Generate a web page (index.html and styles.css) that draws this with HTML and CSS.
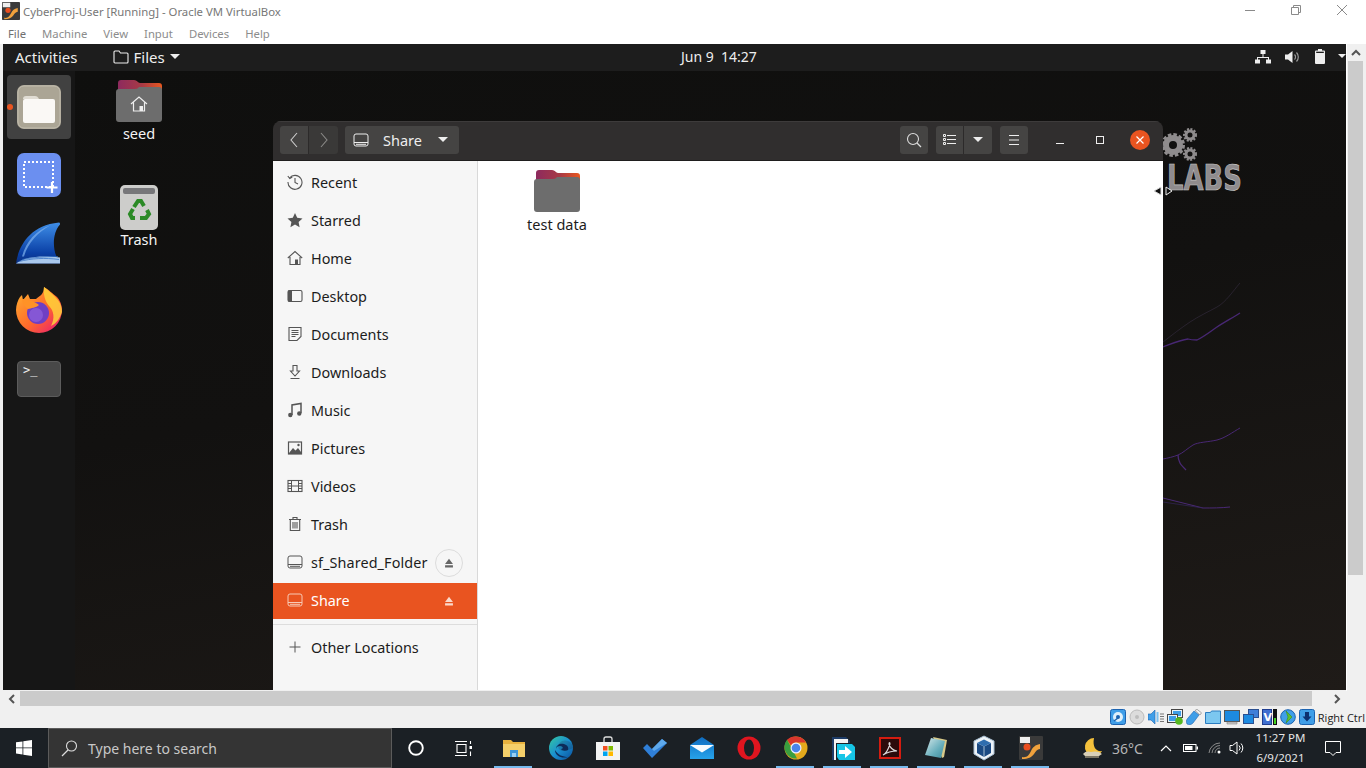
FILE: index.html
```html
<!DOCTYPE html>
<html lang="en">
<head>
<meta charset="utf-8">
<title>CyberProj-User [Running] - Oracle VM VirtualBox</title>
<link rel="stylesheet" href="styles.css">
</head>
<body>
<svg class="defs" aria-hidden="true">
  <defs>
    <filter id="soft" x="-10%" y="-10%" width="120%" height="120%"><feGaussianBlur stdDeviation=".7"/></filter>
    <linearGradient id="folderTop" x1="0" x2="1" y1="0" y2="0"><stop offset="0" stop-color="#8d2a5e"/><stop offset=".55" stop-color="#a83a45"/><stop offset="1" stop-color="#e9581f"/></linearGradient>
    <linearGradient id="sharkG" x1="0" x2="0" y1="0" y2="1"><stop offset="0" stop-color="#3f8fe8"/><stop offset=".75" stop-color="#0a3fa5"/><stop offset="1" stop-color="#0a2f80"/></linearGradient>
    <linearGradient id="foxG" x1="0" x2="1" y1="0" y2="1"><stop offset="0" stop-color="#ffb52e"/><stop offset=".55" stop-color="#ff6a2b"/><stop offset="1" stop-color="#e8127b"/></linearGradient>
    <linearGradient id="mailG" x1="0" x2="0" y1="0" y2="1"><stop offset="0" stop-color="#0f6cc0"/><stop offset="1" stop-color="#27a3ea"/></linearGradient>
    <linearGradient id="edgeG" x1="0" x2="1" y1="0" y2="1"><stop offset="0" stop-color="#36c9a0"/><stop offset=".5" stop-color="#1a8fd0"/><stop offset="1" stop-color="#0b4f9c"/></linearGradient>
    <linearGradient id="noteG" x1="0" x2="1" y1="0" y2="1"><stop offset="0" stop-color="#d5e8ea"/><stop offset=".6" stop-color="#67aebc"/><stop offset="1" stop-color="#3d8b9c"/></linearGradient>
    <symbol id="i-disk" viewBox="0 0 16 16"><rect x="1" y="2" width="14" height="12" rx="2" fill="none" stroke="currentColor" stroke-width="1"/><path d="M1 10.500h14M3 12.300h10" stroke="currentColor" stroke-width="1" fill="none"/></symbol>
    <symbol id="i-eject" viewBox="0 0 16 16"><path d="M8 3l4.500 6h-9z M3.500 10.500h9V13h-9z" fill="currentColor"/></symbol>
    <symbol id="i-vboxapp" viewBox="0 0 24 24"><rect width="24" height="24" rx="1" fill="#3a3a3a"/><rect x="1" y="1" width="10" height="6" fill="#eee"/><circle cx="8" cy="11" r="3.500" fill="#ea4e1f"/><path d="M3 21c5 1 7-2 9-6s4-6 9-7v5c-3 .500-4 2-6 5s-6 5-12 5z" fill="#f2a23c"/></symbol>
  </defs>
</svg>

<header class="title-bar">
  <svg class="title-logo" width="18" height="18"><use href="#i-vboxapp"/></svg>
  <span class="title-text">CyberProj-User [Running] - Oracle VM VirtualBox</span>
  <div class="win-controls">
    <svg width="12" height="12" viewBox="0 0 12 12"><path d="M1 6.500h10" stroke="#8a8a8a"/></svg>
    <svg width="12" height="12" viewBox="0 0 12 12"><path d="M3.500 3V1.500h7v7H9M1.500 3.500h7v7h-7z" fill="none" stroke="#8a8a8a"/></svg>
    <svg width="12" height="12" viewBox="0 0 12 12"><path d="M1 1l10 10M11 1L1 11" stroke="#8a8a8a"/></svg>
  </div>
</header>
<nav class="menu-bar">
  <span class="menu-first">File</span><span>Machine</span><span>View</span><span>Input</span><span>Devices</span><span>Help</span>
</nav>

<div class="guest-row">
  <main class="guest">
    <div class="top-bar">
      <span class="activities">Activities</span>
      <span class="app-menu">
        <svg width="16" height="14" viewBox="0 0 16 14"><path d="M1 3V2a1 1 0 0 1 1-1h4l1.500 2H14a1 1 0 0 1 1 1v8a1 1 0 0 1-1 1H2a1 1 0 0 1-1-1z" fill="none" stroke="#eee" stroke-width="1.100"/></svg>
        <span>Files</span>
        <svg width="10" height="6" viewBox="0 0 10 6"><path d="M0 0h10L5 5z" fill="#eee"/></svg>
      </span>
      <span class="clock">Jun 9&nbsp; 14:27</span>
      <span class="status-icons">
        <svg width="16" height="14" viewBox="0 0 16 14"><path d="M5.500 0h5v4h-5zM0 9.500h5v4H0zM11 9.500h5v4h-5zM7.500 4h1v3h5.500v3h-1V8H3v2H2V7h5.500z" fill="#eee"/></svg>
        <svg width="16" height="14" viewBox="0 0 16 14"><path d="M0 4.500h3L7.500 1v12L3 9.500H0z" fill="#eee"/><path d="M9.500 4.500a3.500 3.500 0 0 1 0 5M11.500 2.500a6.500 6.500 0 0 1 0 9" fill="none" stroke="#999" stroke-width="1.200"/></svg>
        <svg width="10" height="15" viewBox="0 0 10 15"><path d="M3 0h4v1.500h2a1 1 0 0 1 1 1V14a1 1 0 0 1-1 1H1a1 1 0 0 1-1-1V2.500a1 1 0 0 1 1-1h2z" fill="#eee"/><rect x="1.200" y="2.700" width="7.600" height="1.300" fill="#1d1d1d"/></svg>
        <svg width="8" height="5" viewBox="0 0 8 5"><path d="M0 0h8L4 4z" fill="#eee"/></svg>
      </span>
    </div>
    <div class="desk-row">
      <aside class="dock">
        <div class="dock-item active">
          <span class="run-dot"></span>
          <svg width="44" height="44" viewBox="0 0 44 44"><rect width="44" height="44" rx="7" fill="#aba595"/><rect x="1" y="1" width="42" height="42" rx="6" fill="none" stroke="#c1bcae" stroke-width="1"/><path d="M6 14a3 3 0 0 1 3-3h9c2 0 3 1 4 3z" fill="#e0dcd3"/><rect x="6" y="14" width="32" height="24" rx="2" fill="#faf8f5"/></svg>
        </div>
        <div class="dock-item dock-shot">
          <svg width="44" height="44" viewBox="0 0 44 44"><rect width="44" height="44" rx="7" fill="#6b8ff0"/><rect x="7" y="9" width="29" height="25" fill="none" stroke="#fff" stroke-width="2" stroke-dasharray="2 2"/><path d="M35 29v11M29.500 34.500h11" stroke="#fff" stroke-width="2.200"/></svg>
        </div>
        <div class="dock-item dock-shark">
          <svg width="46" height="46" viewBox="0 3 46 43"><path d="M0 45c2-15 12-38 43-41 1 0 1 1 1 2-8 9-8 26-1 37l1 2z" fill="url(#sharkG)"/><path d="M6 38c4-15 14-26 28-31C22 14 12 24 8 38z" fill="#7fb2ee" opacity=".7"/><path d="M0 45c10-7 24-8 44-6v6z" fill="#a9c8ec"/><path d="M3 43c12-3 26-4 40-2M6 41c10-2 24-3 36-3" stroke="#2e6cc0" stroke-width=".7" fill="none"/></svg>
        </div>
        <div class="dock-item dock-fox">
          <svg width="46" height="46" viewBox="0 0 46 46"><path d="M28 0c4 2 9 7 13 10 2 2 5 7 5 13a23 23 0 1 1-46 0c0-5 2-10 4-13l2-2 1 5 5-6 2 5h6c3-3 8-4 8-12z" fill="url(#foxG)"/><path d="M28 0c5 4 10 8 14 13 3 4 4 8 4 12-2 6-5 11-11 14 4-8 3-15-2-20-4-5-6-12-5-19z" fill="#ffd23a" opacity=".85"/><circle cx="22" cy="26" r="11" fill="#6f3fc4"/><circle cx="20" cy="28" r="7" fill="#8f63dd" opacity=".7"/><path d="M6 12c4 0 12 2 17 6-3 3-8 3-11 4-3-2-6-6-6-10z" fill="#ff9227"/></svg>
        </div>
        <div class="dock-item dock-term">
          <div class="term-icon">&gt;_</div>
        </div>
      </aside>

      <section class="desktop">
        <svg class="wallpaper" width="1271" height="619" viewBox="75 71 1271 619">
          <g fill="none" stroke="#6a35b5" filter="url(#soft)" opacity=".6">
            <path d="M1163 347c8-3 17-7 25-8 3 1 6 1 9 1 8-4 14-9 20-13s15-9 23-14" stroke-width="1.300"/>
            <path d="M1163 342c9-7 18-14 27-20s18-10 27-15 16-16 23-24" stroke="#5a4a72" stroke-width=".7" opacity=".7"/>
            <path d="M1163 459c5-1 10-2 15-4s10-7 15-10 16-3 24-5 16-8 23-12" stroke-width="1"/>
            <path d="M1178 455c0 3 1 6 2 8s4 5 6 7" stroke-width="1.300"/>
            <path d="M1163 498c13 3 27 7 40 10 9 0 18 0 27-1" stroke-width="1"/>
            <path d="M1163 502c13 2 27 4 40 6" stroke="#46308a" stroke-width=".7"/>
          </g>
          <g fill="none" stroke="#8f8c8d">
            <circle cx="1173" cy="145" r="7" stroke-width="6"/>
            <circle cx="1173" cy="145" r="10.500" stroke-width="3" stroke-dasharray="3.500 2"/>
            <circle cx="1190" cy="135" r="4" stroke-width="3"/>
            <circle cx="1190" cy="135" r="6" stroke-width="2" stroke-dasharray="2 1.500"/>
            <circle cx="1190" cy="154" r="4" stroke-width="3"/>
            <circle cx="1190" cy="154" r="6" stroke-width="2" stroke-dasharray="2 1.500"/>
          </g>
          <text class="labs" x="1167" y="190" textLength="75" lengthAdjust="spacingAndGlyphs">LABS</text>
        </svg>

        <div class="desk-icon desk-home">
          <svg width="46" height="42" viewBox="0 0 46 42"><path d="M2 11V3a3 3 0 0 1 3-3h13c3 0 4 3 6 3h19a3 3 0 0 1 3 3v9H2z" fill="url(#folderTop)"/><path d="M0 12a3 3 0 0 1 3-3h16c2 0 3-1 4-2h20a3 3 0 0 1 3 3v29a3 3 0 0 1-3 3H3a3 3 0 0 1-3-3z" fill="#6d6d6d"/><path d="M15 24l8-7 8 7M17.500 22.500V31h11v-8.500" fill="none" stroke="#eee" stroke-width="1.200"/><rect x="23.500" y="26" width="3.500" height="5" fill="#eee"/></svg>
          <span>seed</span>
        </div>
        <div class="desk-icon desk-trash">
          <svg width="38" height="45" viewBox="0 0 38 45"><rect width="38" height="45" rx="5" fill="#cdcdcb"/><rect x="3" y="3" width="32" height="6" rx="2" fill="#77777a"/><g fill="none" stroke="#2b8a26" stroke-width="4"><path d="M14 22l4-6 3 0 3 5"/><path d="M27 25l2 4-3 4h-6"/><path d="M15 33h-3l-2-4 3-5"/></g></svg>
          <span>Trash</span>
        </div>

        <div class="files-window">
          <header class="files-head">
            <div class="btn-group">
              <button class="hb hb-nav"><svg width="10" height="18" viewBox="0 0 10 18"><path d="M8 2L2 9l6 7" fill="none" stroke="#ccc" stroke-width="1.100"/></svg></button>
              <button class="hb hb-nav hb-dim"><svg width="10" height="18" viewBox="0 0 10 18"><path d="M2 2l6 7-6 7" fill="none" stroke="#8b8a88" stroke-width="1.100"/></svg></button>
            </div>
            <button class="hb path-btn">
              <svg class="ic-light" width="16" height="16"><use href="#i-disk"/></svg>
              <span>Share</span>
              <svg width="10" height="6" viewBox="0 0 10 6"><path d="M0 0h10L5 5z" fill="#eee"/></svg>
            </button>
            <div class="head-right">
              <button class="hb hb-sq"><svg width="16" height="16" viewBox="0 0 16 16"><circle cx="7" cy="7" r="5.500" fill="none" stroke="#ddd" stroke-width="1.100"/><path d="M11 11l4 4" stroke="#ddd" stroke-width="1.300"/></svg></button>
              <div class="btn-group">
                <button class="hb hb-sq"><svg width="14" height="12" viewBox="0 0 14 12"><path d="M.5.500h2v2h-2zM.5 4.500h2v2h-2zM.5 8.500h2v2h-2zM4 1.500h9M4 5.500h9M4 9.500h9" fill="none" stroke="#eee"/></svg></button>
                <button class="hb hb-sq"><svg width="10" height="6" viewBox="0 0 10 6"><path d="M0 0h10L5 5z" fill="#eee"/></svg></button>
              </div>
              <button class="hb hb-sq"><svg width="12" height="10" viewBox="0 0 12 10"><path d="M1 .500h10M1 5h10M1 9.500h10" stroke="#eee"/></svg></button>
              <div class="wm-btns">
                <svg width="10" height="10" viewBox="0 0 10 10"><path d="M1 8.500h8" stroke="#eee"/></svg>
                <svg width="10" height="10" viewBox="0 0 10 10"><rect x="1.500" y="1.500" width="7" height="7" fill="none" stroke="#eee"/></svg>
                <span class="wm-close"><svg width="10" height="10" viewBox="0 0 10 10"><path d="M1.500 1.500l7 7M8.500 1.500l-7 7" stroke="#fff" stroke-width="1.200"/></svg></span>
              </div>
            </div>
          </header>
          <div class="files-body">
            <nav class="sidebar">
              <a class="row"><svg width="16" height="16" viewBox="0 0 16 16"><path d="M2.500 4A7 7 0 1 1 1 8" fill="none" stroke="#555" stroke-width="1.100"/><path d="M.8 2l2 2.500L5.300 3M8 4v4.500l3 1.500" fill="none" stroke="#555" stroke-width="1.100"/></svg><span>Recent</span></a>
              <a class="row"><svg width="16" height="16" viewBox="0 0 16 16"><path d="M8 1l2.200 4.800 5.300.6-3.900 3.600 1 5.200L8 12.600 3.400 15.200l1-5.200L.5 6.400l5.300-.6z" fill="#555"/></svg><span>Starred</span></a>
              <a class="row"><svg width="16" height="16" viewBox="0 0 16 16"><path d="M.8 8L8 1.500 15.200 8M3 7v7.500h10V7" fill="none" stroke="#555" stroke-width="1.100"/><rect x="8" y="9.500" width="3" height="5" fill="#555"/></svg><span>Home</span></a>
              <a class="row"><svg width="16" height="16" viewBox="0 0 16 16"><rect x="1" y="2.500" width="14" height="11" rx="1.500" fill="none" stroke="#555" stroke-width="1.100"/><path d="M1 2.500h4v11H1z" fill="#555"/></svg><span>Desktop</span></a>
              <a class="row"><svg width="16" height="16" viewBox="0 0 16 16"><path d="M2 1.500h12v9l-4 4H2zM4.500 4.500h7M4.500 6.500h7M4.500 8.500h7M4.500 10.500h4" fill="none" stroke="#555" stroke-width="1.100"/></svg><span>Documents</span></a>
              <a class="row"><svg width="16" height="16" viewBox="0 0 16 16"><path d="M6 1.500h4V7h2.500L8 12 3.500 7H6zM3.500 14.500h9" fill="none" stroke="#555" stroke-width="1.100"/></svg><span>Downloads</span></a>
              <a class="row"><svg width="16" height="16" viewBox="0 0 16 16"><path d="M5 13V3l9-1.500V11" fill="none" stroke="#555" stroke-width="1.500"/><circle cx="3.300" cy="13" r="2.200" fill="#555"/><circle cx="12.300" cy="11.500" r="2.200" fill="#555"/></svg><span>Music</span></a>
              <a class="row"><svg width="16" height="16" viewBox="0 0 16 16"><rect x="1.500" y="2" width="13" height="12" fill="none" stroke="#555" stroke-width="1.200"/><path d="M2 13l4-5 2.500 2.500L11 8l3 4v2H2z" fill="#555"/><circle cx="11.500" cy="5" r="1.200" fill="#555"/></svg><span>Pictures</span></a>
              <a class="row"><svg width="16" height="16" viewBox="0 0 16 16"><rect x="1" y="2.500" width="14" height="11" fill="none" stroke="#555" stroke-width="1.100"/><path d="M4.500 2.500v11M11.500 2.500v11M1 5.500h3.500M1 8h3.500M1 10.500h3.500M11.500 5.500H15M11.500 8H15M11.500 10.500H15M4.500 8h7" fill="none" stroke="#555" stroke-width="1"/></svg><span>Videos</span></a>
              <a class="row"><svg width="16" height="16" viewBox="0 0 16 16"><path d="M2 3.500h12M6 3V1.500h4V3M3.300 4v10.500h9.400V4M6 6v6.500M8 6v6.500M10 6v6.500" fill="none" stroke="#555" stroke-width="1.100"/></svg><span>Trash</span></a>
              <a class="row"><svg class="ic-dark" width="16" height="16"><use href="#i-disk"/></svg><span class="sf-name">sf_Shared_Folder</span><span class="eject-ring"><svg class="ic-mid" width="14" height="14"><use href="#i-eject"/></svg></span></a>
              <a class="row row-active"><svg class="ic-peach" width="16" height="16"><use href="#i-disk"/></svg><span>Share</span><span class="eject-plain"><svg class="ic-pale" width="14" height="14"><use href="#i-eject"/></svg></span></a>
              <hr class="side-sep">
              <a class="row"><svg width="16" height="16" viewBox="0 0 16 16"><path d="M8 2.500v11M2.500 8h11" stroke="#555" stroke-width="1"/></svg><span>Other Locations</span></a>
            </nav>
            <div class="file-area">
              <div class="file-item">
                <svg width="46" height="42" viewBox="0 0 46 42"><path d="M2 11V3a3 3 0 0 1 3-3h13c3 0 4 3 6 3h19a3 3 0 0 1 3 3v9H2z" fill="url(#folderTop)"/><path d="M0 12a3 3 0 0 1 3-3h16c2 0 3-1 4-2h20a3 3 0 0 1 3 3v29a3 3 0 0 1-3 3H3a3 3 0 0 1-3-3z" fill="#6d6d6d"/></svg>
                <span>test data</span>
              </div>
            </div>
          </div>
        </div>

        <svg class="resize-cursor" width="20" height="10" viewBox="0 0 20 10"><path d="M8 1v8L1 5z" fill="#111" stroke="#ddd"/><path d="M13 1v8l6-4z" fill="#111" stroke="#eee"/></svg>
      </section>
    </div>
  </main>
  <div class="v-scroll">
    <span class="sb-arrow"><svg width="10" height="7" viewBox="0 0 10 7"><path d="M1 6l4-4 4 4" fill="none" stroke="#555" stroke-width="2"/></svg></span>
    <span class="sb-thumb"></span>
  </div>
</div>

<div class="h-scroll">
  <svg width="7" height="10" viewBox="0 0 7 10"><path d="M6 1L2 5l4 4" fill="none" stroke="#555" stroke-width="2"/></svg>
  <span class="hs-thumb"></span>
  <svg width="7" height="10" viewBox="0 0 7 10"><path d="M1 1l4 4-4 4" fill="none" stroke="#555" stroke-width="2"/></svg>
</div>

<div class="vm-status">
  <svg width="16" height="16" viewBox="0 0 16 16"><rect x=".5" y=".5" width="15" height="15" rx="2" fill="#3f9ee8" stroke="#1c63b0"/><circle cx="8" cy="8" r="5" fill="#dff0fb"/><circle cx="8" cy="8" r="2" fill="#1c63b0"/><path d="M4 12l4-3" stroke="#1c63b0" stroke-width="1.500"/></svg>
  <svg width="16" height="16" viewBox="0 0 16 16"><circle cx="8" cy="8" r="7" fill="#dcdcdc" stroke="#bbb"/><circle cx="8" cy="8" r="2" fill="#bdbdbd"/></svg>
  <svg width="16" height="16" viewBox="0 0 16 16"><path d="M0 5h3l4-4v14l-4-4H0z" fill="#3f9ee8" stroke="#1c63b0" stroke-width=".6"/><path d="M8.500 3h2v10h-2z" fill="#7cc0ef"/><path d="M12 5h4M12 7.500h4M12 10h4M12 12.500h4" stroke="#777"/></svg>
  <svg width="16" height="16" viewBox="0 0 16 16"><rect x="4.500" y=".5" width="11" height="8" fill="#e8f2fa" stroke="#444"/><rect x="6" y="2" width="8" height="5" fill="#3f9ee8"/><rect x=".5" y="5.500" width="10" height="8" fill="#e8f2fa" stroke="#444"/><rect x="2" y="7" width="7" height="5" fill="#3f9ee8"/><circle cx="12" cy="12" r="3.800" fill="#55b820"/></svg>
  <svg width="16" height="16" viewBox="0 0 16 16"><path d="M1 15c-1-2-1-4 1-6l6-7 5 4-6 8c-2 2-4 2-6 1z" fill="#3f9ee8" stroke="#1c63b0" stroke-width=".6"/><path d="M9 1.500l2-1.200 4.500 3.500L14 6z" fill="#f2f2f2" stroke="#777" stroke-width=".6"/></svg>
  <svg width="16" height="16" viewBox="0 0 16 16"><path d="M.5 3.500h5l1-1.500h9v12.500H.5z" fill="#7cc7f0" stroke="#2a7cc0"/></svg>
  <svg width="16" height="16" viewBox="0 0 16 16"><rect x=".5" y="1.500" width="15" height="11" fill="#1d8ae0" stroke="#555"/><path d="M3 13h10v2H3z" fill="#ccc" stroke="#777" stroke-width=".5"/></svg>
  <svg width="16" height="16" viewBox="0 0 16 16"><rect x="5.500" y=".5" width="10" height="8" fill="#3f7fd8" stroke="#2a4f90"/><rect x=".5" y="5.500" width="10" height="9" fill="#1d8ae0" stroke="#2a4f90"/></svg>
  <span class="vtx"><svg width="10" height="16" viewBox="0 0 10 16"><rect x=".5" y=".5" width="9" height="15" fill="#3f6fd0" stroke="#1e3d90"/><text class="vtx-v" x="1.500" y="12">V</text></svg><i class="vtx-meter"></i></span>
  <svg width="16" height="16" viewBox="0 0 16 16"><circle cx="8" cy="8" r="7.300" fill="#3f9ee8" stroke="#1c63b0"/><path d="M6 2l6 6-6 6 2-6z" fill="#5cc030" stroke="#3a8a1c" stroke-width=".6"/></svg>
  <svg width="16" height="16" viewBox="0 0 16 16"><rect x=".5" y=".5" width="15" height="15" rx="2" fill="#3f9ee8" stroke="#1c63b0"/><path d="M6 3h4v4.500h2.500L8 12.500 3.500 7.500H6z" fill="#0c2f70"/></svg>
  <span class="right-ctrl">Right Ctrl</span>
</div>

<footer class="taskbar">
  <div class="start"><svg width="16" height="16" viewBox="0 0 16 16"><path d="M0 2.300l6.500-.9v6.100H0zM7.300 1.300L16 0v7.500H7.300zM0 8.300h6.500v6.200L0 13.600zM7.300 8.300H16V16l-8.700-1.200z" fill="#fff"/></svg></div>
  <div class="search"><svg width="17" height="17" viewBox="0 0 17 17"><circle cx="10.500" cy="6" r="5" fill="none" stroke="#ddd" stroke-width="1.100"/><path d="M7 10L1 16" stroke="#ddd" stroke-width="1.300"/></svg><span>Type here to search</span></div>
  <div class="tb-sys"><svg width="16" height="16" viewBox="0 0 16 16"><circle cx="8" cy="8" r="6.800" fill="none" stroke="#fff" stroke-width="1.900"/></svg></div>
  <div class="tb-sys"><svg width="17" height="15" viewBox="0 0 17 15"><path d="M0 .5h12M2 3.500h9v8H2zM0 14.500h12M15.500 0v3M15.500 10.500V15" fill="none" stroke="#fff" stroke-width="1.100"/><rect x="14.500" y="5" width="2.500" height="3" fill="#fff"/></svg></div>

  <div class="tb-app run"><svg width="24" height="22" viewBox="0 0 24 22"><path d="M1 3h8l2 2h12v15H1z" fill="#e8b23e"/><path d="M1 7h22v13H1z" fill="#f4cf6a"/><path d="M8 13h8v7H8z" fill="#3c95d8"/><path d="M10 16h4v4h-4z" fill="#9bd0f2"/></svg></div>
  <div class="tb-app"><svg width="24" height="24" viewBox="0 0 24 24"><circle cx="12" cy="12" r="12" fill="url(#edgeG)"/><path d="M24 12c0-6-6-9-11-7-4 2-5 7-2 9 2 2 7 1 13-2z" fill="#1d1f24" opacity=".18"/><path d="M7 13c0-4 4-6 8-5 3 1 5 3 4 6-2 1-6 1-7-1 3 0 2-3-1-3-2 0-4 1-4 3zM6 14c0 6 7 9 13 7-5 0-10-2-13-7z" fill="#0d2b59"/></svg></div>
  <div class="tb-app"><svg width="24" height="24" viewBox="0 0 24 24"><path d="M8 7V3a2 2 0 0 1 2-2h4a2 2 0 0 1 2 2v4" fill="none" stroke="#ddd" stroke-width="1.300"/><rect y="6" width="24" height="18" fill="#f3f3f3"/><rect x="7" y="10" width="4.500" height="4.500" fill="#f25022"/><rect x="12.500" y="10" width="4.500" height="4.500" fill="#7fba00"/><rect x="7" y="15.500" width="4.500" height="4.500" fill="#00a4ef"/><rect x="12.500" y="15.500" width="4.500" height="4.500" fill="#ffb900"/></svg></div>
  <div class="tb-app"><svg width="24" height="20" viewBox="0 0 24 20"><path d="M0 10l4-4 5 5L19 1l5 4L9 20z" fill="#2f7fd8"/><path d="M9 11L19 1l5 4L11 13z" fill="#5ea9ec"/></svg></div>
  <div class="tb-app"><svg width="24" height="22" viewBox="0 0 24 22"><path d="M0 8l12-8 12 8v14H0z" fill="url(#mailG)"/><path d="M0 8h24l-12 7.500z" fill="#f6fbfe"/></svg></div>
  <div class="tb-app"><svg width="24" height="24" viewBox="0 0 24 24"><circle cx="12" cy="12" r="11.500" fill="#e0151f"/><ellipse cx="12" cy="12" rx="5" ry="8.500" fill="#1b2025"/></svg></div>
  <div class="tb-app run"><svg width="24" height="24" viewBox="0 0 24 24"><circle cx="12" cy="12" r="11.500" fill="#e3a91c"/><path d="M12 .5A11.500 11.500 0 0 1 22 6.500H12a5.500 5.500 0 0 0-5 3L3 3.800A11.500 11.500 0 0 1 12 .500z" fill="#d9372d"/><path d="M3 3.800l5 9 5 9.600A11.500 11.500 0 0 1 3 3.800z" fill="#3a9e3f"/><circle cx="12" cy="12" r="5.500" fill="#eef"/><circle cx="12" cy="12" r="4.300" fill="#4a85ea"/></svg></div>
  <div class="tb-app run"><svg width="24" height="24" viewBox="0 0 24 24"><path d="M1 1h14l4 4v2H5v17H1z" fill="#1d3b66"/><path d="M3 3h14v4H5v17H3z" fill="#f3f3f3"/><path d="M6 8h15l3 3v13H8l-2-3z" fill="#16c5e6"/><path d="M8 14h6v-4l7 6-7 6v-4H8z" fill="#fff"/></svg></div>
  <div class="tb-app run"><svg width="22" height="22" viewBox="0 0 22 22"><rect x="1" y="1" width="20" height="20" fill="#2b0b0b" stroke="#d41c10" stroke-width="2"/><path d="M4 18c3-1 5-5 7-11 0-2-1-2-1 0 1 4 3 6 8 7-3 0-8 0-14 4z" fill="none" stroke="#ddd" stroke-width="1.100"/></svg></div>
  <div class="tb-app run"><svg width="24" height="24" viewBox="0 0 24 24"><path d="M8 1l14 3-3 17-2 1z" fill="#d8c98a"/><path d="M6 2l14 3-4 17L0 19z" fill="url(#noteG)"/></svg></div>
  <div class="tb-app run"><svg width="24" height="26" viewBox="0 0 24 26"><path d="M12 1l10 5v13l-10 6-10-6V6z" fill="#eef3f8" stroke="#a9bfd3"/><path d="M5 8l7 3.500L19 8v10l-7 4-7-4z" fill="#1b4a83"/><path d="M5 8l7-3.500L19 8l-7 3.500z" fill="#2f6dae"/><path d="M12 11.500V22" stroke="#a9bfd3"/></svg></div>
  <div class="tb-app run"><svg width="24" height="24"><use href="#i-vboxapp"/></svg></div>

  <div class="tray">
    <span class="tray-weather"><svg width="22" height="22" viewBox="0 0 22 22"><path d="M12 1a9 9 0 1 0 8 13c-5 1-10-3-8-13z" fill="#f4c13c"/><path d="M1 17c2-3 6-3 8-2 3-1 8-1 11 2l-3 2H3z" fill="#d8cfb8"/><path d="M3 20h14" stroke="#9a8f78" stroke-width="1.500"/></svg></span>
    <span class="tray-temp">36°C</span>
    <span class="tray-ic tray-25"><svg width="12" height="8" viewBox="0 0 12 8"><path d="M1 7l5-5 5 5" fill="none" stroke="#fff" stroke-width="1.200"/></svg></span>
    <span class="tray-ic tray-25"><svg width="15" height="8" viewBox="0 0 15 8"><rect x=".5" y=".5" width="12.500" height="7" fill="none" stroke="#fff"/><rect x="2" y="2" width="7.500" height="4" fill="#fff"/><rect x="13.500" y="2.500" width="1.500" height="3" fill="#fff"/></svg></span>
    <span class="tray-ic tray-24"><svg width="14" height="12" viewBox="0 0 14 12"><path d="M1 11A11 11 0 0 1 12 1M4 11A8 8 0 0 1 12 3.500M7 11a5 5 0 0 1 5-5" fill="none" stroke="#8a8a8a" stroke-width="1"/><circle cx="11" cy="10" r="1.500" fill="#fff"/></svg></span>
    <span class="tray-ic tray-20"><svg width="16" height="14" viewBox="0 0 16 14"><path d="M1 4.500h2.500L8 1v12L3.500 9.500H1z" fill="none" stroke="#fff"/><path d="M10 4.500a3.500 3.500 0 0 1 0 5M12 2.500a6.500 6.500 0 0 1 0 9" fill="none" stroke="#fff"/></svg></span>
    <span class="tray-clock"><span>11:27 PM</span><span>6/9/2021</span></span>
    <span class="tray-notify"><svg width="16" height="15" viewBox="0 0 16 15"><path d="M.5.500h15v11h-4.500L8 14.500 5 11.500H.5z" fill="none" stroke="#fff"/></svg></span>
  </div>
</footer>
</body>
</html>
```

FILE: styles.css
```css
* { box-sizing: border-box; }
html, body { margin: 0; padding: 0; }
body {
  width: 1366px;
  height: 768px;
  overflow: hidden;
  display: flex;
  flex-direction: column;
  background: #f0f0f0;
  font-family: "Noto Sans", "Open Sans", sans-serif;
}
svg { display: block; flex: none; }
.defs { position: absolute; width: 0; height: 0; }
.ic-light { color: #eee; }
.ic-dark { color: #555; }
.ic-mid { color: #666; }
.ic-peach { color: #f7c9b5; }
.ic-pale { color: #fbd9cb; }

/* VirtualBox chrome */
.title-bar {
  height: 22px;
  background: #fff;
  display: flex;
  align-items: center;
  padding-left: 2px;
}
.title-logo { margin-right: 3px; }
.title-text { font-size: 11.350px; color: #777; }
.win-controls {
  margin-left: auto;
  display: flex;
  gap: 34px;
  padding-right: 18px;
  margin-top: -2px;
}
.menu-bar {
  height: 22px;
  background: #fff;
  display: flex;
  align-items: center;
  gap: 16px;
  padding-left: 8px;
  font-size: 11.300px;
  color: #8c8c8c;
}
.menu-first { color: #707070; }

.guest-row { display: flex; height: 647px; padding-left: 3px; background: #f0f0f0; }
.guest { width: 1343px; height: 646px; display: flex; flex-direction: column; overflow: hidden; }

/* GNOME top bar */
.top-bar {
  height: 27px;
  background: #1d1d1d;
  color: #eee;
  display: flex;
  align-items: center;
  font-size: 15px;
  padding-bottom: 2px;
  position: relative;
}
.activities { margin-left: 12px; }
.app-menu { margin-left: 35px; display: flex; align-items: center; gap: 5px; }
.clock { position: absolute; left: 678px; top: 3px; font-size: 14px; }
.status-icons { margin-left: auto; display: flex; align-items: center; gap: 14px; }
.status-icons svg:last-child { margin-left: -1px; }

.desk-row { flex: 1; display: flex; min-height: 0; }
.dock {
  width: 72px;
  background: #161616;
  display: flex;
  flex-direction: column;
  align-items: center;
}
.dock-item {
  width: 64px;
  height: 64px;
  margin-top: 4px;
  display: flex;
  align-items: center;
  justify-content: center;
  border-radius: 4px;
  position: relative;
}
.dock-item.active { background: #414141; }
.dock-shot { margin-top: 14px; height: 44px; }
.dock-shark { margin-top: 23px; height: 46px; }
.dock-fox { margin-top: 21px; height: 46px; }
.dock-term { margin-top: 28px; height: 36px; }
.run-dot {
  position: absolute;
  left: 0;
  top: 29px;
  width: 6px;
  height: 6px;
  border-radius: 50%;
  background: #e95420;
}
.term-icon {
  width: 44px;
  height: 36px;
  background: #484848;
  border: 1px solid #5c5c5c;
  border-radius: 4px;
  color: #eee;
  font: 12px/14px "DejaVu Sans Mono", monospace;
  padding: 1px 5px;
}

/* Desktop */
.desktop {
  flex: 1;
  position: relative;
  background: linear-gradient(170deg, #0f0f0e 0%, #121110 45%, #1f1b18 100%);
  overflow: hidden;
}
.wallpaper { position: absolute; left: 0; top: 0; }
.labs {
  font: bold 36px "DejaVu Sans", sans-serif;
  fill: #8f8b8d;
  stroke: #c9c9c9;
  stroke-width: .6px;
}
.desk-icon {
  position: absolute;
  width: 80px;
  display: flex;
  flex-direction: column;
  align-items: center;
  color: #f4f4f4;
  font-size: 14.500px;
  line-height: 20px;
}
.desk-home { left: 24px; top: 9px; }
.desk-home span { margin-top: 1px; }
.desk-trash { left: 24px; top: 114px; }
.desk-trash span { margin-top: -1px; }

/* Files window */
.files-window {
  position: absolute;
  left: 198px;
  top: 50px;
  width: 890px;
  bottom: 0;
  display: flex;
  flex-direction: column;
  border-radius: 8px 8px 0 0;
  overflow: hidden;
}
.files-head {
  height: 40px;
  flex: none;
  background: #302e2e;
  border-top: 1px solid #3d3b3b;
  border-bottom: 1px solid #1f1e1e;
  display: flex;
  align-items: center;
  padding-left: 7px;
  padding-bottom: 2px;
}
.btn-group { display: flex; }
.hb {
  height: 28px;
  border: 0;
  padding: 0;
  background: #454443;
  color: #eee;
  font: inherit;
  display: flex;
  align-items: center;
  justify-content: center;
  border-radius: 3px;
}
.btn-group .hb:first-child { border-radius: 3px 0 0 3px; border-right: 1px solid #2c2a2a; }
.btn-group .hb:last-child { border-radius: 0 3px 3px 0; }
.hb-nav { width: 29px; }
.hb-dim { background: #3a3938; }
.path-btn {
  width: 114px;
  margin-left: 7px;
  justify-content: flex-start;
  padding-left: 8px;
  padding-bottom: 1px;
  font-size: 14.500px;
  gap: 14px;
}
.path-btn svg:last-child { margin-left: 2px; }
.head-right { margin-left: auto; display: flex; align-items: center; gap: 8px; }
.hb-sq { width: 28px; }
.wm-btns { display: flex; align-items: center; gap: 30px; margin-left: 19px; padding-right: 13px; }
.wm-close {
  width: 20px;
  height: 20px;
  margin-left: -5px;
  border-radius: 50%;
  background: #e95420;
  display: flex;
  align-items: center;
  justify-content: center;
}
.files-body { flex: 1; display: flex; min-height: 0; }
.sidebar {
  width: 205px;
  background: #f6f6f6;
  border-right: 1px solid #d9d9d9;
  padding-top: 3px;
  font-size: 14.400px;
  color: #1c1c1c;
}
.row {
  height: 38px;
  display: flex;
  align-items: center;
  padding-left: 14px;
  padding-bottom: 2px;
  gap: 8px;
  position: relative;
}
.row-active {
  height: 36px;
  margin-top: 1px;
  background: #e95420;
  color: #fff;
}
.sf-name { letter-spacing: .1px; }
.eject-ring {
  position: absolute;
  left: 162px;
  top: 5px;
  width: 28px;
  height: 28px;
  border: 1px solid #dcdcdc;
  border-radius: 50%;
  display: flex;
  align-items: center;
  justify-content: center;
}
.eject-plain { position: absolute; left: 169px; top: 11px; }
.side-sep { border: 0; border-top: 1px solid #ddd; margin: 5px 0 4px; }
.file-area { flex: 1; background: #fff; padding: 9px 0 0 29px; }
.file-item {
  width: 100px;
  display: flex;
  flex-direction: column;
  align-items: center;
  font-size: 14.500px;
  line-height: 20px;
  color: #1c1c1c;
}
.file-item span { margin-top: 2px; }
.resize-cursor { position: absolute; left: 1078px; top: 115px; }

/* Scrollbars */
.v-scroll { width: 20px; background: #f0f0f0; padding-left: 1px; display: flex; flex-direction: column; border-left: 1px solid #fff; }
.sb-arrow { height: 17px; display: flex; align-items: center; justify-content: center; width: 15px; }
.sb-thumb { width: 15px; height: 514px; background: #cbcbcb; }
.h-scroll {
  height: 15px;
  background: #f0f0f0;
  display: flex;
  align-items: center;
  padding-left: 8px;
}
.hs-thumb { width: 1292px; height: 15px; background: #cbcbcb; margin: 0 22px 0 5px; }

/* VM status bar */
.vm-status {
  height: 22px;
  background: #f0f0f0;
  display: flex;
  align-items: center;
  justify-content: flex-end;
  gap: 3px;
  font-size: 11px;
  color: #222;
  padding-right: 1px;
}
.vtx { display: flex; gap: 1px; }
.vtx-v { font: bold 11px "DejaVu Sans", sans-serif; fill: #fff; }
.vtx-meter { display: block; width: 4px; height: 16px; background: linear-gradient(#111 55%, #3fd020 55%); border: 1px solid #111; }
.right-ctrl { white-space: nowrap; font-family: "Open Sans", sans-serif; }

/* Windows taskbar */
.taskbar {
  flex: 1;
  min-height: 0;
  background: #1b2025;
  display: flex;
  align-items: center;
  color: #fff;
}
.start { width: 48px; display: flex; justify-content: center; }
.search {
  width: 344px;
  height: 40px;
  background: #343434;
  border: 1px solid #5b5b5b;
  display: flex;
  align-items: center;
  padding-left: 12px;
  gap: 10px;
  font-size: 14px;
  color: #c8c8c8;
}
.tb-sys { width: 48px; height: 40px; display: flex; align-items: center; justify-content: center; }
.tb-sys + .tb-sys { width: 46px; margin-right: 4px; }
.tb-app {
  width: 47px;
  height: 40px;
  display: flex;
  align-items: center;
  justify-content: center;
  position: relative;
}
.run::after {
  content: "";
  position: absolute;
  left: 4px;
  right: 5px;
  bottom: 0;
  height: 2px;
  background: #76b9ed;
}
.tray { margin-left: auto; height: 40px; display: flex; align-items: center; }
.tray-weather { width: 30px; }
.tray-temp { color: #b5b5b5; width: 41px; font-size: 14px; }
.tray-ic { display: flex; justify-content: center; }
.tray-25 { width: 25px; }
.tray-24 { width: 24px; }
.tray-20 { width: 20px; }
.tray-clock {
  width: 63px;
  margin-left: 2px;
  display: flex;
  flex-direction: column;
  align-items: center;
  font-size: 11.500px;
  line-height: 20px;
  color: #e6e6e6;
}
.tray-notify { width: 50px; display: flex; justify-content: center; margin-left: 4px; padding-right: 16px; }
```
